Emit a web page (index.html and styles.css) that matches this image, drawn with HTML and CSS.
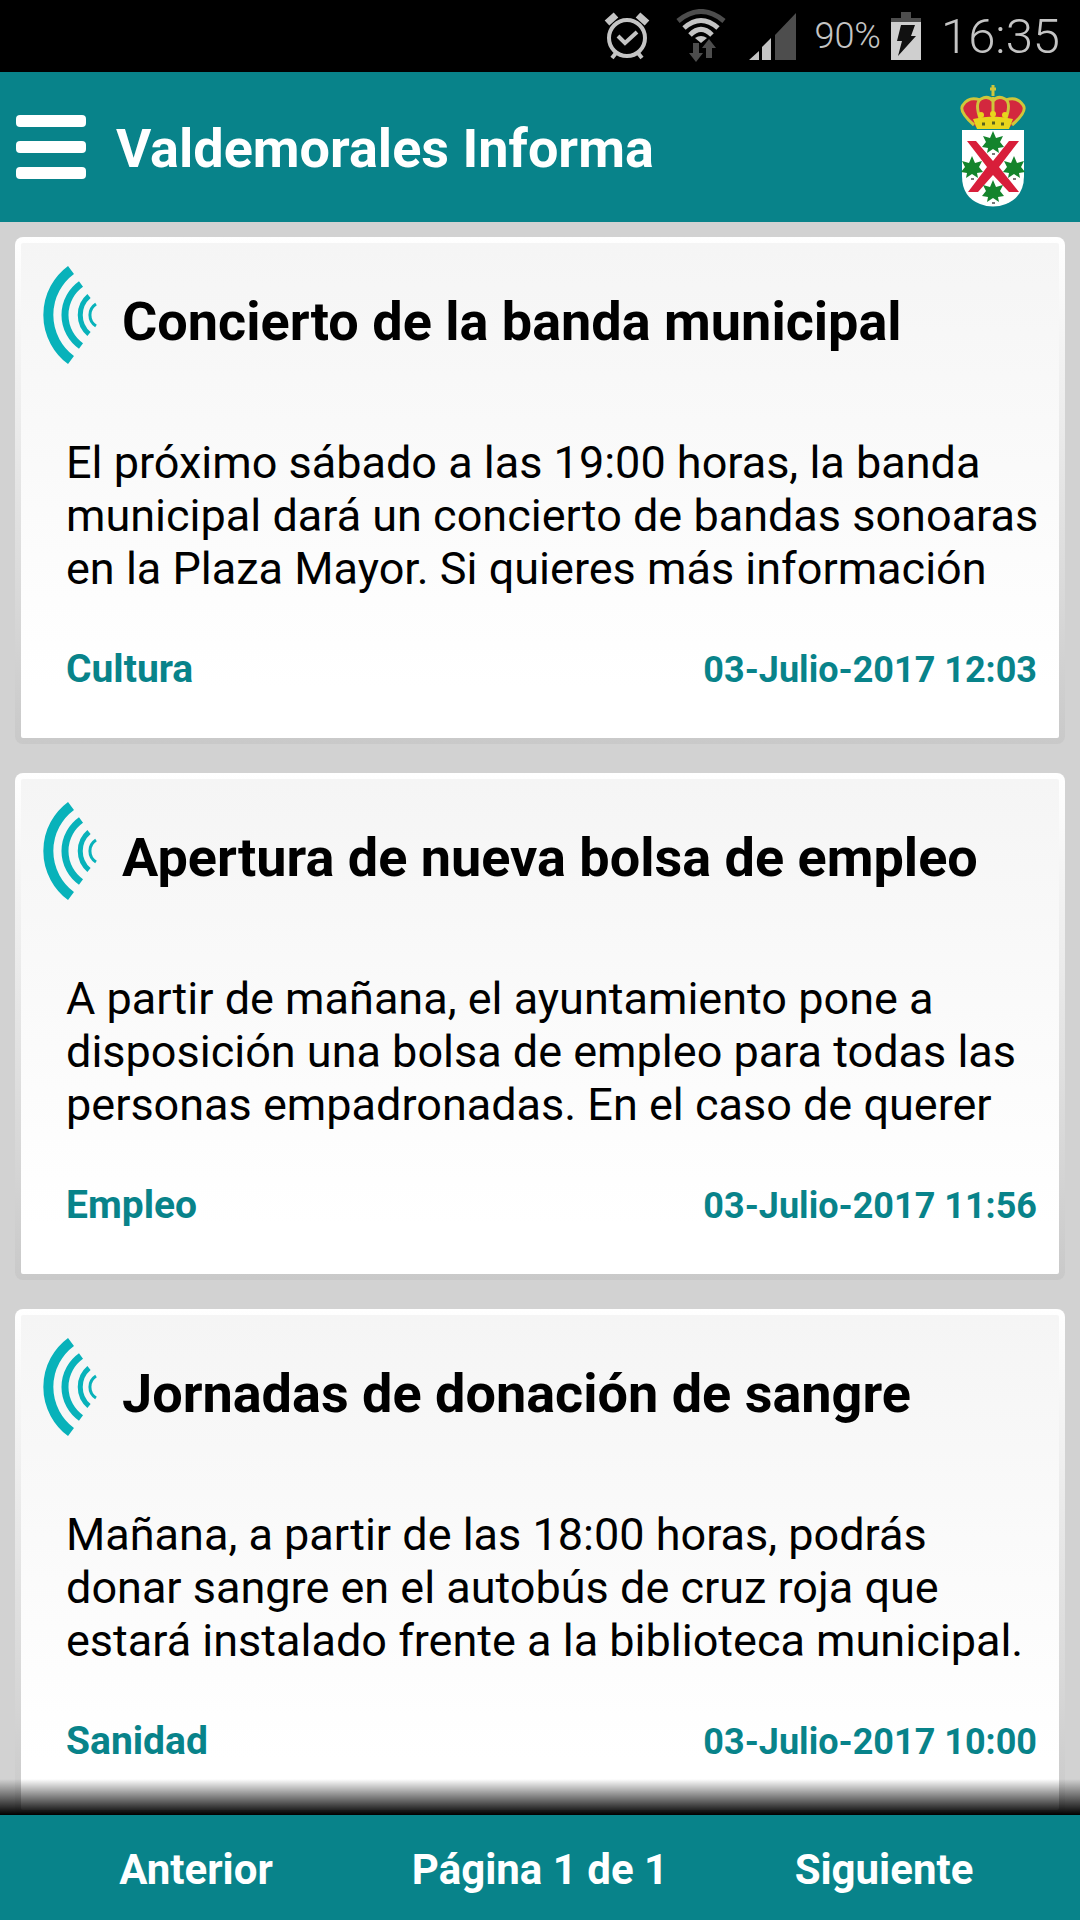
FILE: index.html
```
<!DOCTYPE html>
<html lang="es">
<head>
  <meta charset="utf-8">
  <meta name="viewport" content="width=device-width, initial-scale=1">
  <title>Valdemorales Informa</title>
  <link rel="stylesheet" href="styles.css">
</head>
<body>
  <div class="status-bar">
    <svg class="status-alarm" width="46" height="48" viewBox="0 0 46 48">
      <g fill="none" stroke="#c4c4c4">
        <circle cx="23" cy="26" r="18" stroke-width="4"/>
        <path d="M14 24l7 7 12-11" stroke-width="4"/>
        <path d="M3 11l9-8M34 3l9 8" stroke-width="7"/>
        <path d="M12 41l-4 5M34 41l4 5" stroke-width="4"/>
      </g>
    </svg>
    <svg class="status-wifi" width="50" height="54" viewBox="0 0 50 54">
      <g fill="none">
        <path d="M2 12Q25-7 48 12" stroke="#4d4d4d" stroke-width="5"/>
        <path d="M8 19Q25 4 42 19" stroke="#c4c4c4" stroke-width="5"/>
        <path d="M14 26Q25 15 36 26" stroke="#c4c4c4" stroke-width="5"/>
      </g>
      <path d="M19 29q6-4 12 0l-6 5z" fill="#c4c4c4"/>
      <path d="M17 34h6v10h4l-7 9-7-9h4zM36 49h-6V39h-4l7-9 7 9h-4z" fill="#4d4d4d"/>
    </svg>
    <svg class="status-signal" width="50" height="50" viewBox="0 0 50 50">
      <path d="M2 49l10-9v9zM15 49V36l9-9v22z" fill="#c4c4c4"/>
      <path d="M28 49V24L49 2v47z" fill="#4d4d4d"/>
    </svg>
    <span class="status-percent">90%</span>
    <svg class="status-battery" width="30" height="48" viewBox="0 0 30 48">
      <path d="M10 0h10v6h10v4H0V6h10z" fill="#4d4d4d"/>
      <path d="M0 10h30v38H0z" fill="#cfcfcf"/>
      <path d="M10 13h14l-4 11h5L7 44l4-15H6z" fill="#111"/>
    </svg>
    <span class="status-time">16:35</span>
  </div>

  <header class="header">
    <button class="menu-button" type="button" aria-label="Menú">
      <span></span>
      <span></span>
      <span></span>
    </button>
    <h1>Valdemorales Informa</h1>
    <svg class="shield" width="66" height="124" viewBox="0 0 66 124">
      <defs>
        <path id="leaf" d="M0-11L3-4l7-2-3 6 4 5-6 1 1 5-6-4-6 4 1-5-6-1 4-5-3-6 7 2z"/>
      </defs>
      <path d="M16 42Q-1 27 4 20q8-10 29-6 21-4 29 6 5 7-12 22z" fill="#d3283e"/>
      <g fill="none" stroke="#cfc63a" stroke-width="3">
        <path d="M14 40Q-2 26 3 20q6-9 17-5M52 40Q68 26 63 20q-6-9-17-5"/>
        <path d="M21 36Q14 18 21 14q7-4 12 2 5-6 12-2 7 4 0 22M33 12v24"/>
        <path d="M33 0v11M30 4h6"/>
      </g>
      <g fill="#e8d61c">
        <path d="M13 34q20-5 40 0l-4 10H17z"/>
        <circle cx="21" cy="30" r="3"/>
        <circle cx="33" cy="29" r="3"/>
        <circle cx="45" cy="30" r="3"/>
      </g>
      <path d="M22 39h3M32 38h3M41 39h3" stroke="#58631f" stroke-width="3"/>
      <path d="M2 45h62v46q0 21-18 28-13 5-26 0Q2 112 2 91z" fill="#fff"/>
      <path d="M7 56h9l17 20 16-20h10L39 82l20 25H49L33 90l-15 17H8l19-25z" fill="#d81e3a"/>
      <g fill="#14842c">
        <use href="#leaf" transform="translate(33 57)"/>
        <use href="#leaf" transform="translate(12 82)"/>
        <use href="#leaf" transform="translate(54 82)"/>
        <use href="#leaf" transform="translate(33 106)"/>
      </g>
      <path d="M32 69h3M11 94h3M53 94h3M32 118h3" stroke="#777" stroke-width="2"/>
    </svg>
  </header>

  <main class="news">
    <article class="card">
      <div class="card-head">
        <svg class="waves" width="56" height="100" viewBox="0 0 56 100">
          <g fill="none" stroke="#08b2ba">
            <path d="M28 5A56 56 0 0 0 28 95" stroke-width="10"/>
            <path d="M38 19A38 38 0 0 0 38 81" stroke-width="7"/>
            <path d="M46 31A25 25 0 0 0 46 69" stroke-width="5"/>
            <path d="M53 39A13 13 0 0 0 53 61" stroke-width="3"/>
          </g>
        </svg>
        <h2>Concierto de la banda municipal</h2>
      </div>
      <p>El próximo sábado a las 19:00 horas, la banda municipal dará un concierto de bandas sonoaras en la Plaza Mayor. Si quieres más información</p>
      <div class="card-foot">
        <span class="category">Cultura</span>
        <time>03-Julio-2017 12:03</time>
      </div>
    </article>

    <article class="card">
      <div class="card-head">
        <svg class="waves" width="56" height="100" viewBox="0 0 56 100">
          <g fill="none" stroke="#08b2ba">
            <path d="M28 5A56 56 0 0 0 28 95" stroke-width="10"/>
            <path d="M38 19A38 38 0 0 0 38 81" stroke-width="7"/>
            <path d="M46 31A25 25 0 0 0 46 69" stroke-width="5"/>
            <path d="M53 39A13 13 0 0 0 53 61" stroke-width="3"/>
          </g>
        </svg>
        <h2>Apertura de nueva bolsa de empleo</h2>
      </div>
      <p>A partir de mañana, el ayuntamiento pone a disposición una bolsa de empleo para todas las personas empadronadas. En el caso de querer</p>
      <div class="card-foot">
        <span class="category">Empleo</span>
        <time>03-Julio-2017 11:56</time>
      </div>
    </article>

    <article class="card">
      <div class="card-head">
        <svg class="waves" width="56" height="100" viewBox="0 0 56 100">
          <g fill="none" stroke="#08b2ba">
            <path d="M28 5A56 56 0 0 0 28 95" stroke-width="10"/>
            <path d="M38 19A38 38 0 0 0 38 81" stroke-width="7"/>
            <path d="M46 31A25 25 0 0 0 46 69" stroke-width="5"/>
            <path d="M53 39A13 13 0 0 0 53 61" stroke-width="3"/>
          </g>
        </svg>
        <h2>Jornadas de donación de sangre</h2>
      </div>
      <p>Mañana, a partir de las 18:00 horas, podrás donar sangre en el autobús de cruz roja que estará instalado frente a la biblioteca municipal.</p>
      <div class="card-foot">
        <span class="category">Sanidad</span>
        <time>03-Julio-2017 10:00</time>
      </div>
    </article>
  </main>

  <footer class="pager">
    <button type="button">Anterior</button>
    <span>Página 1 de 1</span>
    <button type="button">Siguiente</button>
  </footer>
</body>
</html>
```
FILE: styles.css
```
* {
  box-sizing: border-box;
}
body {
  margin: 0;
  height: 100vh;
  display: flex;
  flex-direction: column;
  background-color: #d2d2d2;
  color: #000;
  font-family: Roboto, sans-serif;
}
h1, h2, p {
  margin: 0;
}

/* Barra de estado */
.status-bar {
  flex: none;
  display: flex;
  align-items: center;
  justify-content: flex-end;
  height: 72px;
  padding-right: 20px;
  background-color: #000;
  color: #c4c4c4;
}
.status-wifi {
  margin-left: 26px;
}
.status-signal {
  margin-left: 21px;
}
.status-percent {
  margin-left: 17px;
  font-size: 36px;
  font-weight: 300;
}
.status-battery {
  margin-left: 10px;
}
.status-time {
  margin-left: 20px;
  font-size: 49px;
  font-weight: 300;
}

/* Cabecera */
.header {
  flex: none;
  display: flex;
  align-items: center;
  height: 150px;
  padding: 0 54px 0 16px;
  background-color: #08838a;
  color: #fff;
}
.header h1 {
  flex: 1;
  margin-left: 30px;
  padding-top: 4px;
  font-size: 54px;
  line-height: 64px;
}
.menu-button {
  display: flex;
  flex-direction: column;
  gap: 14px;
  width: 70px;
  padding: 0;
  border: 0;
  background: none;
}
.menu-button span {
  height: 12px;
  border-radius: 4px;
  background-color: #fff;
}

/* Noticias */
.news {
  flex: 1;
  min-height: 0;
  overflow: hidden;
  position: relative;
  display: flex;
  flex-direction: column;
  gap: 29px;
  padding: 15px 15px 0;
}
.news::after {
  content: "";
  position: absolute;
  left: 0;
  right: 0;
  bottom: 0;
  height: 36px;
  background: linear-gradient(transparent, #000);
}
.card {
  flex: none;
  padding: 22px 10px 45px 22px;
  border: 6px solid transparent;
  border-radius: 8px;
  background: linear-gradient(#f5f5f5, #fff 90%) padding-box, linear-gradient(#fff, #c9c9c9) border-box;
}
.card-head {
  display: flex;
  align-items: center;
  gap: 23px;
}
.card-head h2 {
  padding-top: 14px;
  font-size: 54px;
  line-height: 64px;
}
.card p {
  padding: 71px 0 0 23px;
  font-size: 45px;
  line-height: 53px;
}
.card-foot {
  display: flex;
  align-items: baseline;
  justify-content: space-between;
  padding: 51px 12px 0 23px;
  color: #08838a;
  font-size: 39px;
  line-height: 46px;
  font-weight: bold;
}
.card-foot time {
  font-size: 36px;
}

/* Paginador */
.pager {
  flex: none;
  display: grid;
  grid-template-columns: 1fr 1fr 1fr;
  align-items: center;
  height: 105px;
  padding: 4px 24px 0;
  background-color: #08838a;
  color: #fff;
  font-size: 42px;
  font-weight: bold;
  text-align: center;
}
.pager button {
  padding: 0;
  border: 0;
  background: none;
  color: inherit;
  font: inherit;
}
```
